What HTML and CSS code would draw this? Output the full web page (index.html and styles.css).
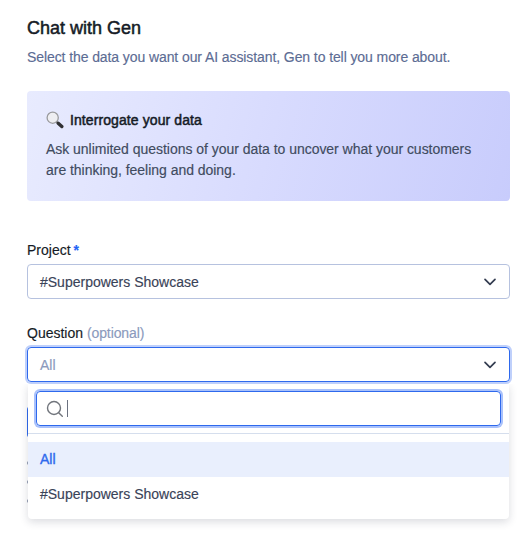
FILE: index.html
```html
<!DOCTYPE html>
<html lang="en">
<head>
    <meta charset="UTF-8">
    <meta name="viewport" content="width=device-width, initial-scale=1.0">
    <title>Chat with Gen</title>
    <link rel="stylesheet" href="styles.css">
</head>
<body>

<div class="page">
    <h1>Chat with Gen</h1>
    <p class="intro">Select the data you want our AI assistant, Gen to tell you more about.</p>

    <div class="banner">
        <div class="banner-title">
            <svg class="lens" width="18" height="18" viewBox="0 0 18 18">
                <path d="M10.2 10.2l2.4 2.4" stroke="#777" stroke-width="2"/>
                <path d="M12.2 12.2l3.6 3.3" stroke="#303033" stroke-width="3.4" stroke-linecap="round"/>
                <circle cx="6.7" cy="6.7" r="5.6" fill="#eeeef2" stroke="#999a9d" stroke-width="1.3"/>
            </svg>
            <h2>Interrogate your data</h2>
        </div>
        <p>Ask unlimited questions of your data to uncover what your customers<br>are thinking, feeling and doing.</p>
    </div>

    <div class="field">
        <label class="label">Project <span class="required">*</span></label>
        <div class="select">
            <span>#Superpowers Showcase</span>
            <svg class="chevron" width="14" height="8" viewBox="0 0 14 8"><path d="M2 1.3L7 6.3l5-5"/></svg>
        </div>
    </div>

    <div class="field">
        <label class="label">Question <span class="optional">(optional)</span></label>
        <div class="select open">
            <span>All</span>
            <svg class="chevron" width="14" height="8" viewBox="0 0 14 8"><path d="M2 1.3L7 6.3l5-5"/></svg>
            <div class="dropdown">
                <div class="search-row">
                    <div class="search">
                        <svg width="18" height="18" viewBox="0 0 18 18">
                            <circle cx="8" cy="8" r="6.5"/>
                            <path d="M12.7 12.7l3.6 3.6"/>
                        </svg>
                        <span class="caret"></span>
                    </div>
                </div>
                <div class="option selected">All</div>
                <div class="option">#Superpowers Showcase</div>
            </div>
        </div>
    </div>

    <!-- content mostly hidden behind the menu -->
    <div class="submit"></div>
    <div class="marks"><i></i><i></i><i></i></div>
</div>

</body>
</html>
```

FILE: styles.css
```css
* {
    box-sizing: border-box;
}
body {
    margin: 0;
    background-color: #fff;
    color: #151b26;
    font-family: "Liberation Sans", Arial, sans-serif;
    font-size: 14px;
    white-space: nowrap;
    -webkit-text-stroke: 0.15px;
}
.page {
    width: 532px;
    height: 548px;
    padding: 16px 22px 0 27px;
    overflow: hidden;
}
h1, h2, p {
    margin: 0;
}
h1 {
    font-size: 18px;
    font-weight: 500;
    line-height: 24px;
    -webkit-text-stroke: 0.5px;
}
.intro {
    margin-top: 7px;
    line-height: 20px;
    letter-spacing: -0.09px;
    color: #5c6c94;
}
.banner {
    height: 110px;
    margin-top: 24px;
    padding: 19px;
    border-radius: 4px;
    background: linear-gradient(105deg, #e8ebfe 0%, #d8dbfe 50%, #c8ccfc 100%);
}
.banner-title {
    display: flex;
    align-items: center;
    height: 21px;
}
.lens {
    margin-right: 6px;
    margin-top: -1px;
}
.banner h2 {
    font-size: 14px;
    font-weight: 500;
    line-height: 21px;
    letter-spacing: 0.09px;
    -webkit-text-stroke: 0.5px;
}
.banner p {
    margin-top: 8px;
    line-height: 21px;
    letter-spacing: -0.03px;
    color: #404b60;
}
.label {
    display: block;
    line-height: 20px;
}
.required {
    color: #2264f5;
    font-weight: bold;
    margin-left: -1px;
}
.optional {
    color: #8b9abd;
    letter-spacing: -0.1px;
}
.banner + .field {
    margin-top: 39px;
}
.field + .field {
    margin-top: 24px;
}
.select {
    position: relative;
    display: flex;
    align-items: center;
    justify-content: space-between;
    height: 35px;
    margin-top: 4px;
    padding: 0 12px;
    border: 1px solid #b6c2df;
    border-radius: 4px;
    color: #3a4358;
}
.chevron {
    fill: none;
    stroke: #343d51;
    stroke-width: 1.7;
    stroke-linecap: round;
    stroke-linejoin: round;
}
.select.open {
    border-color: #2e69ed;
    box-shadow: 0 0 0 2px #bfd0fb;
    color: #8b9abd;
}
.dropdown {
    position: absolute;
    top: 36px;
    left: 0;
    right: 0;
    height: 135px;
    border-radius: 0 0 4px 4px;
    background-color: #fff;
    box-shadow: 0 3px 9px rgba(30, 40, 60, 0.16);
    color: #3a4358;
    clip-path: inset(0 -20px -20px -20px);
}
.search-row {
    height: 50px;
    margin-bottom: 8px;
    padding: 7px 8px 0;
    border-bottom: 1px solid #d5deed;
}
.search {
    display: flex;
    align-items: center;
    height: 35px;
    padding-left: 9px;
    border: 1px solid #2e69ed;
    border-radius: 4px;
    box-shadow: 0 0 0 2px #a9c1fb;
}
.search svg {
    fill: none;
    stroke: #71757c;
    stroke-width: 1.4;
    stroke-linecap: round;
}
.caret {
    width: 1px;
    height: 17px;
    margin-left: 3px;
    background-color: #6b7180;
}
.option {
    height: 35px;
    padding-left: 12px;
    line-height: 34px;
}
.option.selected {
    background-color: #e9effd;
    color: #2e69ed;
    -webkit-text-stroke: 0.35px;
}
.submit {
    width: 90px;
    height: 32px;
    margin-top: 24px;
    border-radius: 4px;
    background-color: #2e69ed;
}
.marks {
    display: grid;
    gap: 15px;
    margin-top: 23px;
}
.marks i {
    width: 4px;
    height: 4px;
    border-radius: 2px;
    background-color: #8b95ab;
}
```
